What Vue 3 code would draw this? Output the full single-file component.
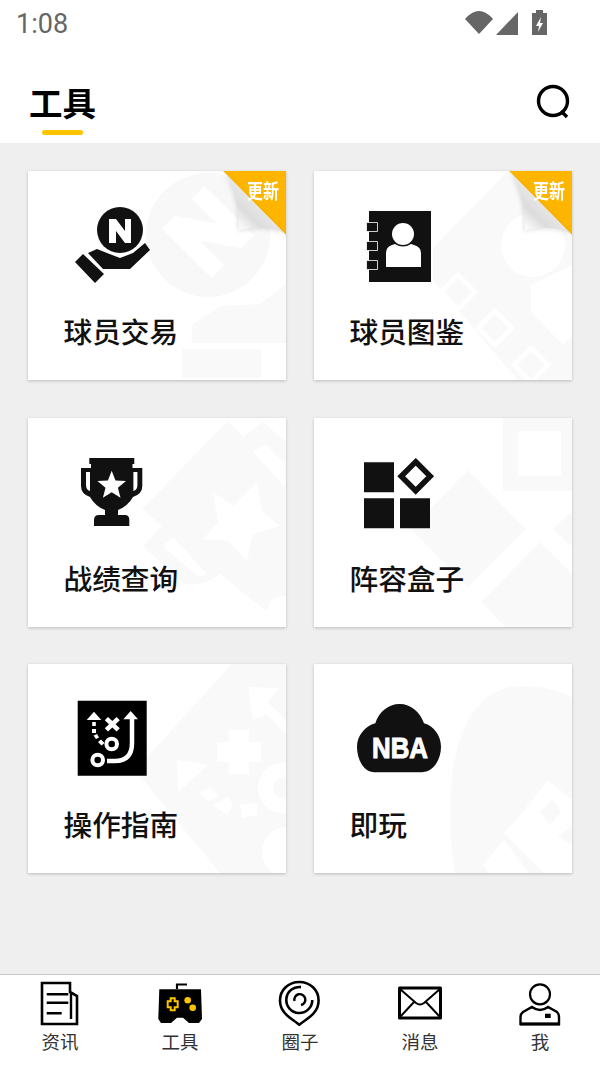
<script setup>
const tabs = [
  { label: '资讯', icon: 'news' },
  { label: '工具', icon: 'game' },
  { label: '圈子', icon: 'circle' },
  { label: '消息', icon: 'mail' },
  { label: '我', icon: 'me' }
]
</script>

<template>
  <div class="page">
    <div class="status">
      <span class="time">1:08</span>
      <svg class="status-icons" width="85" height="28" viewBox="0 0 85 28">
        <path d="M0 10Q14-6 28 10L14 25Z" fill="#666"/>
        <path d="M31 26L53 3V26Z" fill="#666"/>
        <path d="M67 4h4V1h7v3h4v22H67z" fill="#666"/>
        <path d="M76 8l-5 9h3l-1 6 5-9h-3z" fill="#fff"/>
      </svg>
    </div>

    <header class="head">
      <div class="title-wrap">
        <h1 class="title">工具</h1>
        <span class="underline"></span>
      </div>
      <svg class="search" width="36" height="36" viewBox="0 0 36 36">
        <circle cx="17" cy="17" r="14.5" fill="none" stroke="#000" stroke-width="3.4"/>
        <path d="M25 27l6 6" stroke="#000" stroke-width="3.4"/>
      </svg>
    </header>

    <main class="grid">
      <article class="card">
        <svg class="mark" viewBox="0 0 258 209">
          <circle cx="180" cy="64" r="62" fill="#f8f8f8"/>
          <path d="M35 36V10h6l8 13V10h6v26h-6l-8-13v13z" fill="#fff" transform="translate(180 61) rotate(-45) scale(3 2.7) translate(-45 -23)"/>
          <path d="M164 172v-18l28-19 40-2 26-20v59z" fill="#f9f9f9"/>
          <path d="M154 178h79v29h-79z" fill="#f9f9f9"/>
        </svg>
        <svg class="icon" width="80" height="80" viewBox="0 0 80 80">
          <circle cx="45" cy="23" r="23" fill="#111"/>
          <path d="M34 36V12h7l9 12V12h6v24h-6l-9-12v12z" fill="#fff"/>
          <path d="M13 46l9-4 10 4 13 5 13-5 12-10 5 7-20 19H28z" fill="#111"/>
          <path d="M0 55l8-8 21 20-9 9z" fill="#111"/>
        </svg>
        <span class="name">球员交易</span>
        <div class="fold">
          <svg class="curl" width="63" height="64" viewBox="0 0 63 64">
            <defs>
              <linearGradient id="curlShade" x1="31" y1="32" x2="12" y2="52" gradientUnits="userSpaceOnUse">
                <stop offset="0" stop-color="#e6e6e6"/>
                <stop offset=".45" stop-color="#dcdcdc"/>
                <stop offset="1" stop-color="#fbfbfb"/>
              </linearGradient>
            </defs>
            <path d="M0 0L62 63C50 56 35 56 16 59C16 35 12 15 0 0Z" fill="url(#curlShade)"/>
          </svg>
          <span class="tag">更新</span>
        </div>
      </article>

      <article class="card">
        <svg class="mark" viewBox="0 0 258 209">
          <path d="M194 0L119 77V110L204 209H258V0Z" fill="#f9f9f9"/>
          <circle cx="219" cy="74" r="32" fill="#fff"/>
          <path d="M217 114V141L249 174L258 165V94Z" fill="#fff"/>
          <path d="M144 104l17 17-17 17-17-17z" fill="none" stroke="#fff" stroke-width="5"/>
          <path d="M181 140l17 17-17 17-17-17z" fill="none" stroke="#fff" stroke-width="5"/>
          <path d="M217 177l17 17-17 17-17-17z" fill="none" stroke="#fff" stroke-width="5"/>
        </svg>
        <svg class="icon" width="80" height="80" viewBox="0 0 80 80">
          <path d="M8 4h62v71H8z" fill="#111"/>
          <path d="M5.500 15.500h11v9h-11zM5.500 34.500h11v9h-11zM5.500 53.500h11v9h-11z" fill="#111" stroke="#fff" stroke-width=".8"/>
          <circle cx="42" cy="27" r="11" fill="#fff"/>
          <path d="M25 60V46q0-6 6-8l3-1q8 5 16 0l3 1q7 2 7 8v14z" fill="#fff"/>
        </svg>
        <span class="name">球员图鉴</span>
        <div class="fold">
          <svg class="curl" width="63" height="64" viewBox="0 0 63 64">
            <path d="M0 0L62 63C50 56 35 56 16 59C16 35 12 15 0 0Z" fill="url(#curlShade)"/>
          </svg>
          <span class="tag">更新</span>
        </div>
      </article>

      <article class="card">
        <svg class="mark" viewBox="0 0 258 209">
          <path d="M200 3L114 91L134 108L115 128L155 165Q175 170 192 156L258 209V24L235 4L215 19Z" fill="#f9f9f9"/>
          <path d="M229 64L234 93L252 108L225 116L219 143L200 123L175 121L190 105L185 74L205 88Z" fill="#fff"/>
          <path d="M225 34L237 26L257 46V69Z" fill="#fff"/>
          <path d="M135 128L145 119L179 156L170 159Z" fill="#fff"/>
          <circle cx="255" cy="194" r="16" fill="#fff"/>
        </svg>
        <svg class="icon" width="80" height="80" viewBox="0 0 80 80">
          <path d="M14.3 4H59.3V10H57.5V14H67.3V32Q67.3 40 58 43Q53 52 43 56V61H50Q54.3 61 54.3 66V72H19V66Q19 61 24 61H30V56Q20 52 15 43Q6 40 6 32V14H16V10H14.3Z" fill="#111"/>
          <path d="M11 18h4V37Q11 36 11 31ZM62.4 18h-4V37Q62.4 36 62.4 31Z" fill="#fff"/>
          <path d="M36.7 16.7L40.5 26.4L51 27.1L42.9 33.7L45.5 43.8L36.7 38.2L27.9 43.8L30.5 33.7L22.4 27.1L32.9 26.4Z" fill="#fff"/>
        </svg>
        <span class="name">战绩查询</span>
      </article>

      <article class="card">
        <svg class="mark" viewBox="0 0 258 209">
          <path d="M189 0h69v73h-69z" fill="#f9f9f9"/>
          <path d="M204 13h43v45h-43z" fill="#fff"/>
          <path d="M154 52L212 111L154 169L97 111Z" fill="#f9f9f9"/>
          <path d="M226 124L167 184L191 209H258V156Z" fill="#f9f9f9"/>
          <path d="M258 93L239 111L258 129Z" fill="#f9f9f9"/>
        </svg>
        <svg class="icon" width="80" height="80" viewBox="0 0 80 80">
          <path d="M3 8.300h30v30H3zM3 44.300h30v30H3zM39 44.300h30v30H39z" fill="#111"/>
          <path d="M54.700 7.800L69.200 22.300L54.700 36.800L40.200 22.300Z" fill="none" stroke="#111" stroke-width="5.500"/>
        </svg>
        <span class="name">阵容盒子</span>
      </article>

      <article class="card">
        <svg class="mark" viewBox="0 0 258 209">
          <path d="M204 0H258V209H192L107 106Z" fill="#f9f9f9"/>
          <path d="M220 23L252 24L239 38L258 56V70L238 50L225 56Z" fill="#fff"/>
          <path d="M201 66h20v12h12v20h-12v12h-20v-12h-12V78h12z" fill="#fff"/>
          <path d="M149 96L180 101L169 111L150 128Z" fill="#fff"/>
          <path d="M172 129L182 123L190 131L180 138ZM185 141L200 133L205 141L199 151ZM212 141L229 139L229 151L214 154Z" fill="#fff"/>
          <circle cx="255" cy="124" r="25" fill="#fff"/>
          <circle cx="255" cy="124" r="10" fill="#f9f9f9"/>
          <circle cx="259" cy="188" r="25" fill="#fff"/>
        </svg>
        <svg class="icon" width="80" height="80" viewBox="0 0 80 80">
          <path d="M2.700 .7h69v75h-69z" fill="#000"/>
          <path d="M19 11.700L26.300 20H11.700Z" fill="#fff"/>
          <path d="M17.200 22h3.600v4h-3.600zM17 29h4v4h-4zM18.500 35.500l3.500-1.500 2 3.500-3 1.500zM23 42l3-2.500 3.500 3.500-3 2.500z" fill="#fff"/>
          <path d="M33 17l4.300 4 4.300-4 3.200 3.300-4.200 4 4.200 4-3.200 3.300-4.300-4-4.300 4-3.200-3.300 4.200-4-4.200-4z" fill="#fff"/>
          <circle cx="36.700" cy="44" r="5.300" fill="none" stroke="#fff" stroke-width="4"/>
          <circle cx="22.700" cy="60" r="5.300" fill="none" stroke="#fff" stroke-width="4"/>
          <path d="M32 61h8q17 0 17-18V18" fill="none" stroke="#fff" stroke-width="4.500"/>
          <path d="M55.700 11L63 19.300H48.300Z" fill="#fff"/>
        </svg>
        <span class="name">操作指南</span>
      </article>

      <article class="card">
        <svg class="mark" viewBox="0 0 258 209">
          <path d="M141 209c-6-30-6-90 0-115 8-40 30-72 66-72 20 0 40 4 51 12v175z" fill="#f9f9f9"/>
          <path d="M204 154L234 116L258 136V209H230L190 169Z" fill="#fff"/>
          <path d="M169 201L190 176L215 209H175Z" fill="#fff"/>
          <path d="M226 148L239 136L247 148L236 161ZM244 173L258 161V181Z" fill="#f9f9f9"/>
        </svg>
        <svg class="icon" width="80" height="80" viewBox="0 0 80 80">
          <path d="M13.700 72.300C3 72.300-4 60-4 46.700C-4 36 4 26 14.300 23.300C18 12 27 4 38.700 4C50 4 59 12 63 23.300C73 26 80 36 80 46.700C80 60 72 72.300 60.300 72.300Z" fill="#111"/>
          <text class="nba" x="39" y="58" text-anchor="middle" textLength="56" lengthAdjust="spacingAndGlyphs">NBA</text>
        </svg>
        <span class="name">即玩</span>
      </article>
    </main>

    <nav class="tabs">
      <div v-for="t in tabs" :key="t.label" class="tab">
        <svg class="tab-icon" width="46" height="46" viewBox="0 0 46 46">
          <template v-if="t.icon === 'news'">
            <path d="M5 3h28v9l7 4v28H5z" fill="none" stroke="#000" stroke-width="2.600"/>
            <path d="M9.700 14.300h21.600M9.700 22.700h21.600M9.700 33.300h15" stroke="#000" stroke-width="2.600"/>
            <path d="M34 12v27" stroke="#000" stroke-width="2.400"/>
          </template>
          <template v-else-if="t.icon === 'game'">
            <path d="M20 9V4.500h10" fill="none" stroke="#000" stroke-width="2.200"/>
            <path d="M2.300 9.300H44L45 39L42 43H32L26 37.700H20L14 43H4L1.300 39Z" fill="#000"/>
            <path d="M10.700 21.300h3v-3h4v3h3v6h-3v3h-4v-3h-3z" fill="none" stroke="#ffc400" stroke-width="2"/>
            <circle cx="30.700" cy="20.300" r="3.300" fill="#ffc400"/>
            <circle cx="35.700" cy="27.700" r="3.300" fill="#ffc400"/>
          </template>
          <template v-else-if="t.icon === 'circle'">
            <path d="M22.300 45C18 40 3 35 3 20.500C3 10 11.500 2 22.300 2S41.600 10 41.600 20.500C41.600 35 26.600 40 22.300 45Z" fill="none" stroke="#000" stroke-width="2.600"/>
            <path d="M24 7.100A13 13 0 1 0 35.300 20" fill="none" stroke="#000" stroke-width="2.600"/>
            <path d="M17.500 21A5.500 5.500 0 1 1 24 25" fill="none" stroke="#000" stroke-width="2.400"/>
          </template>
          <template v-else-if="t.icon === 'mail'">
            <path d="M2.500 8h41v30h-41z" fill="none" stroke="#000" stroke-width="3" stroke-linejoin="round"/>
            <path d="M3 9l16 14q4 3 8 0L43 9M3 37l14-15M43 37L29 22" fill="none" stroke="#000" stroke-width="2"/>
          </template>
          <template v-else>
            <circle cx="23" cy="14.300" r="10" fill="none" stroke="#000" stroke-width="2.200"/>
            <path d="M3.500 44V37Q3.500 34 6 32L15 27Q23 33 31 27L40 32Q42 34 42 37V44Z" fill="none" stroke="#000" stroke-width="2.400"/>
            <path d="M3 44h40" stroke="#000" stroke-width="3"/>
            <path d="M28 33.700h5.700V38H28z" fill="#000"/>
          </template>
        </svg>
        <span class="tab-label">{{ t.label }}</span>
      </div>
    </nav>
  </div>
</template>

<style scoped>
.page {
  width: 600px;
  height: 1066px;
  display: flex;
  flex-direction: column;
  background: #fff;
  font-family: "Noto Sans CJK SC", "Noto Sans", sans-serif;
  overflow: hidden;
}
.status {
  box-sizing: border-box;
  height: 48px;
  display: flex;
  justify-content: space-between;
  align-items: center;
  padding: 0 50px 0 16px;
  flex: none;
}
.time {
  font-family: Roboto, sans-serif;
  font-size: 27px;
  color: #666;
}
.status-icons {
  margin-bottom: 3px;
}
.head {
  box-sizing: border-box;
  height: 95px;
  flex: none;
  display: flex;
  justify-content: space-between;
  align-items: flex-start;
  padding: 35px 28px 0 29px;
}
.title-wrap {
  display: flex;
  flex-direction: column;
  align-items: center;
}
.title {
  margin: 0;
  font-size: 33.500px;
  line-height: 38px;
  font-weight: 700;
  color: #000;
}
.underline {
  width: 41px;
  height: 5px;
  margin-top: 9px;
  border-radius: 3px;
  background: #ffc400;
}
.search {
  margin-top: 1px;
}
.grid {
  box-sizing: border-box;
  flex: 1;
  display: grid;
  grid-template-columns: 258px 258px;
  grid-auto-rows: 209px;
  column-gap: 28px;
  row-gap: 37.500px;
  align-content: start;
  padding: 28px 27px 0 28px;
  background: #efefef;
}
.card {
  position: relative;
  background: #fff;
  box-shadow: 0 1px 3px rgba(0, 0, 0, .22);
  overflow: hidden;
}
.mark {
  position: absolute;
  inset: 0;
  width: 100%;
  height: 100%;
}
.icon {
  position: absolute;
  left: 47px;
  top: 36px;
  overflow: visible;
}
.name {
  position: absolute;
  left: 35.500px;
  top: 140px;
  font-size: 28.700px;
  line-height: 40px;
  font-weight: 500;
  color: #111;
}
.fold {
  position: absolute;
  right: 0;
  top: 0;
  width: 63px;
  height: 64px;
}
.fold::before {
  content: "";
  position: absolute;
  inset: 0;
  background: #fdb500;
  clip-path: polygon(0 0, 100% 0, 100% 100%);
}
.tag {
  position: absolute;
  left: 20px;
  top: 8px;
  width: 40px;
  font-size: 20px;
  line-height: 24px;
  font-weight: 700;
  white-space: nowrap;
  transform: scaleX(.8);
  color: #fff;
}
.curl {
  position: absolute;
  left: 0;
  top: 0;
  overflow: visible;
  filter: drop-shadow(-1px 1px 2px rgba(0, 0, 0, .12));
}
.tabs {
  box-sizing: border-box;
  height: 92px;
  flex: none;
  display: grid;
  grid-template-columns: repeat(5, 120px);
  border-top: 1px solid #c8c8c8;
  background: #fff;
}
.tab {
  display: flex;
  flex-direction: column;
  align-items: center;
  padding-top: 5px;
}
.tab-icon {
  display: block;
}
.tab-label {
  font-size: 18.500px;
  line-height: 24px;
  margin-top: 3px;
  color: #333;
}
.nba {
  font-family: "Liberation Sans", sans-serif;
  font-size: 30px;
  font-weight: 700;
  fill: #fff;
  stroke: #fff;
  stroke-width: 1px;
}
</style>
<style>
html, body {
  margin: 0;
  background: #fff;
}
</style>
